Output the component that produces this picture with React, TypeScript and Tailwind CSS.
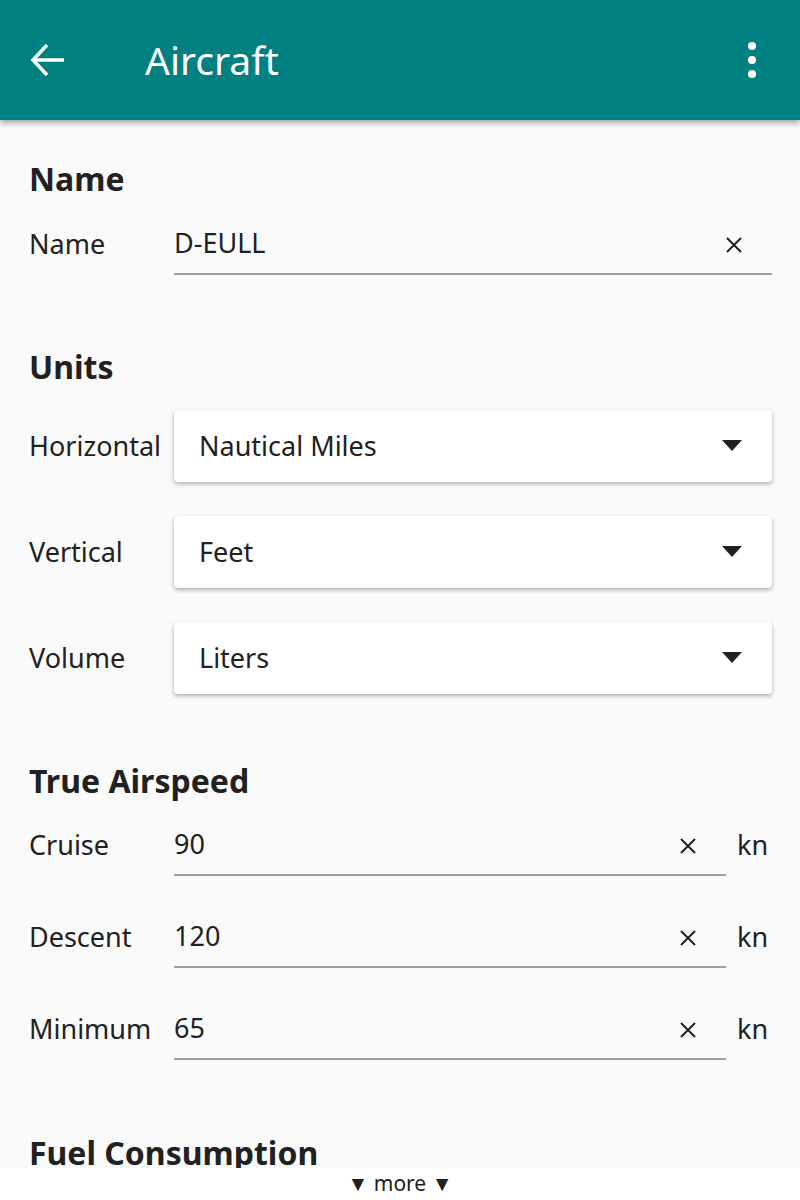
const font = { fontFamily: '"Noto Sans", "Open Sans", sans-serif' };

function ClearIcon() {
  return (
    <svg width="20" height="20" viewBox="0 0 20 20" className="shrink-0 mt-[4px]">
      <path d="M3 3 L17 17 M17 3 L3 17" stroke="#212121" strokeWidth="2" />
    </svg>
  );
}

function TextRow({ label, value, unit }: { label: string; value: string; unit?: string }) {
  return (
    <div className="flex items-center h-[92px]">
      <div className="w-[145px] text-[27px] text-[#212121]">{label}</div>
      <div className="flex-1 flex items-center h-[62px] border-b-2 border-[#9e9e9e]">
        <span className="flex-1 text-[27px] text-[#212121]">{value}</span>
        <span className="mr-[28px]">
          <ClearIcon />
        </span>
      </div>
      {unit && <div className="w-[46px] pl-[11px] text-[27px] text-[#212121]">{unit}</div>}
    </div>
  );
}

function SelectRow({ label, value }: { label: string; value: string }) {
  return (
    <div className="flex items-center h-[106px]">
      <div className="w-[145px] text-[27px] text-[#212121] whitespace-nowrap">{label}</div>
      <div className="flex-1 flex items-center h-[72px] bg-white rounded-[4px] shadow-[0_2px_4px_rgba(0,0,0,0.3)] pl-[25px] pr-[30px]">
        <span className="flex-1 text-[27px] text-[#212121]">{value}</span>
        <svg width="20" height="12" viewBox="0 0 20 12">
          <path d="M0 0 L20 0 L10 11 Z" fill="#212121" />
        </svg>
      </div>
    </div>
  );
}

function Heading({ children }: { children: string }) {
  return <h2 className="text-[32px] font-bold text-[#212121] leading-none">{children}</h2>;
}

export default function App() {
  return (
    <div style={font} className="w-[800px] h-[1200px] bg-[#fafafa] relative overflow-hidden flex flex-col">
      <header className="h-[120px] bg-[#008080] flex items-center shrink-0 shadow-[0_3px_6px_rgba(0,0,0,0.35)] relative z-10">
        <svg width="36" height="36" viewBox="0 0 36 36" className="ml-[30px]">
          <path d="M3 18 H34 M17 3 L3 18 L17 33" stroke="white" strokeWidth="3.5" fill="none" />
        </svg>
        <h1 className="ml-[79px] text-[39px] text-white">Aircraft</h1>
        <div className="ml-auto mr-[44px] flex flex-col gap-[6px]">
          <span className="w-[8px] h-[8px] rounded-full bg-white" />
          <span className="w-[8px] h-[8px] rounded-full bg-white" />
          <span className="w-[8px] h-[8px] rounded-full bg-white" />
        </div>
      </header>

      <main className="flex-1 pl-[29px] pr-[28px] pt-[43px]">
        <Heading>Name</Heading>
        <div className="mt-[3px]">
          <div className="flex items-center h-[92px]">
            <div className="w-[145px] text-[27px] text-[#212121]">Name</div>
            <div className="flex-1 flex items-center h-[62px] border-b-2 border-[#9e9e9e]">
              <span className="flex-1 text-[27px] text-[#212121]">D-EULL</span>
              <span className="mr-[28px]">
                <ClearIcon />
              </span>
            </div>
          </div>
        </div>

        <div className="mt-[61px]">
          <Heading>Units</Heading>
        </div>
        <div className="mt-[10px]">
          <SelectRow label="Horizontal" value="Nautical Miles" />
          <SelectRow label="Vertical" value="Feet" />
          <SelectRow label="Volume" value="Liters" />
        </div>

        <div className="mt-[54px]">
          <Heading>True Airspeed</Heading>
        </div>
        <div className="mt-[2px]">
          <TextRow label="Cruise" value="90" unit="kn" />
          <TextRow label="Descent" value="120" unit="kn" />
          <TextRow label="Minimum" value="65" unit="kn" />
        </div>

        <div className="mt-[62px]">
          <Heading>Fuel Consumption</Heading>
        </div>
      </main>

      <footer className="absolute bottom-0 left-0 right-0 h-[32px] bg-white flex items-center justify-center text-[21px] text-[#212121]">
        ▼ more ▼
      </footer>
    </div>
  );
}
